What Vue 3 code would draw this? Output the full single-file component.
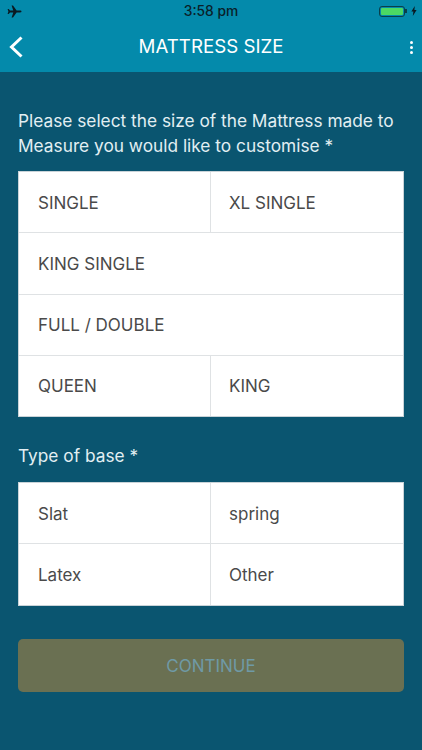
<script setup>
const sizes = [
  [{ label: 'SINGLE' }, { label: 'XL SINGLE' }],
  [{ label: 'KING SINGLE' }],
  [{ label: 'FULL / DOUBLE' }],
  [{ label: 'QUEEN' }, { label: 'KING' }],
]
const bases = [
  [{ label: 'Slat' }, { label: 'spring' }],
  [{ label: 'Latex' }, { label: 'Other' }],
]
</script>

<template>
  <div class="screen">
    <header class="header">
      <div class="status">
        <svg class="plane" width="15" height="13" viewBox="0 0 15 13">
          <path d="M14.5 6.5c0-.5-.6-.9-1.4-.9H9.6L6 .4H4.6l1.7 5.2H3L1.7 4H.6l.8 2.5-.8 2.5h1.1L3 7.4h3.3L4.6 12.6H6l3.6-5.2h3.5c.8 0 1.4-.4 1.4-.9z" fill="#0a1a22" />
        </svg>
        <span class="time">3:58 pm</span>
        <div class="battery-group">
          <div class="battery"><div class="battery-fill"></div></div>
          <div class="battery-tip"></div>
          <svg class="bolt" width="6" height="10" viewBox="0 0 6 10">
            <path d="M3.8 0L0.4 5.6h2L1.8 10l3.8-6H3.4z" fill="#0a1a22" />
          </svg>
        </div>
      </div>
      <div class="nav">
        <svg class="back" width="16" height="24" viewBox="0 0 16 24">
          <path d="M13.5 2.5L3.5 12l10 9.5" fill="none" stroke="#fff" stroke-width="3" />
        </svg>
        <h1 class="title">MATTRESS SIZE</h1>
        <div class="more"><i></i><i></i><i></i></div>
      </div>
    </header>

    <main class="content">
      <p class="question">Please select the size of the Mattress made to Measure you would like to customise *</p>
      <div class="table">
        <div v-for="(row, r) in sizes" :key="r" class="row">
          <div v-for="cell in row" :key="cell.label" class="cell">{{ cell.label }}</div>
        </div>
      </div>

      <p class="question type">Type of base *</p>
      <div class="table">
        <div v-for="(row, r) in bases" :key="r" class="row">
          <div v-for="cell in row" :key="cell.label" class="cell">{{ cell.label }}</div>
        </div>
      </div>

      <button class="continue" type="button">CONTINUE</button>
    </main>
  </div>
</template>

<style scoped>
.screen {
  width: 422px;
  height: 750px;
  overflow: hidden;
  background: #0a5570;
  font-family: Inter, "Liberation Sans", sans-serif;
  display: flex;
  flex-direction: column;
}
.header {
  height: 72px;
  background: #048aab;
  flex: none;
  display: flex;
  flex-direction: column;
}
.status {
  height: 22px;
  position: relative;
  display: flex;
  align-items: center;
  justify-content: space-between;
  padding: 0 5px 0 7px;
}
.time {
  position: absolute;
  left: 0;
  right: 0;
  top: 3px;
  text-align: center;
  font-size: 13.8px;
  font-weight: 500;
  color: #0a1f2a;
}
.battery-group {
  display: flex;
  align-items: center;
}
.battery {
  width: 26px;
  height: 11px;
  border: 1px solid #0a3f4a;
  border-radius: 3px;
  padding: 1px;
  box-sizing: border-box;
}
.battery-fill {
  height: 100%;
  background: #4cd964;
  border-radius: 1px;
}
.battery-tip {
  width: 2px;
  height: 4px;
  background: #0a3f4a;
  margin-right: 4px;
}
.nav {
  flex: 1;
  display: flex;
  align-items: center;
  justify-content: space-between;
  position: relative;
  padding: 0 9px 0 8px;
}
.title {
  position: absolute;
  left: 0;
  right: 0;
  top: 13px;
  margin: 0;
  text-align: center;
  font-size: 18.7px;
  line-height: 24px;
  font-weight: 400;
  color: #fff;
}
.more {
  display: flex;
  flex-direction: column;
  gap: 2px;
}
.more i {
  width: 3px;
  height: 3px;
  border-radius: 50%;
  background: #fff;
}
.content {
  padding: 0 18px;
}
.question {
  margin: 36px 0 13px;
  font-size: 17.3px;
  line-height: 25px;
  color: #e2eff3;
}
.question.type {
  margin: 26px 0 14px;
}
.table {
  background: #fff;
  border: 1px solid #c9d3d8;
}
.row {
  display: flex;
  box-sizing: border-box;
  height: 61px;
  border-top: 1px solid #dfe2e4;
}
.row:first-child {
  border-top: 0;
  height: 60px;
}
.row:first-child .cell {
  padding-top: 2px;
}
.row:nth-child(2) {
  height: 62px;
}
.cell {
  box-sizing: border-box;
  flex: 1 1 0;
  display: flex;
  align-items: center;
  padding-left: 18px;
  font-size: 17px;
  color: #4a4a4a;
  border-left: 1px solid #dfe2e4;
}
.cell:first-child {
  border-left: 0;
  padding-left: 19px;
  flex: 0 0 191px;
}
.cell:only-child {
  flex: 1 1 0;
}
.continue {
  display: block;
  width: 100%;
  height: 53px;
  margin-top: 33px;
  border: 0;
  border-radius: 5px;
  background: #6a7052;
  color: #6f9aa6;
  font-family: inherit;
  font-size: 17px;
}
</style>
